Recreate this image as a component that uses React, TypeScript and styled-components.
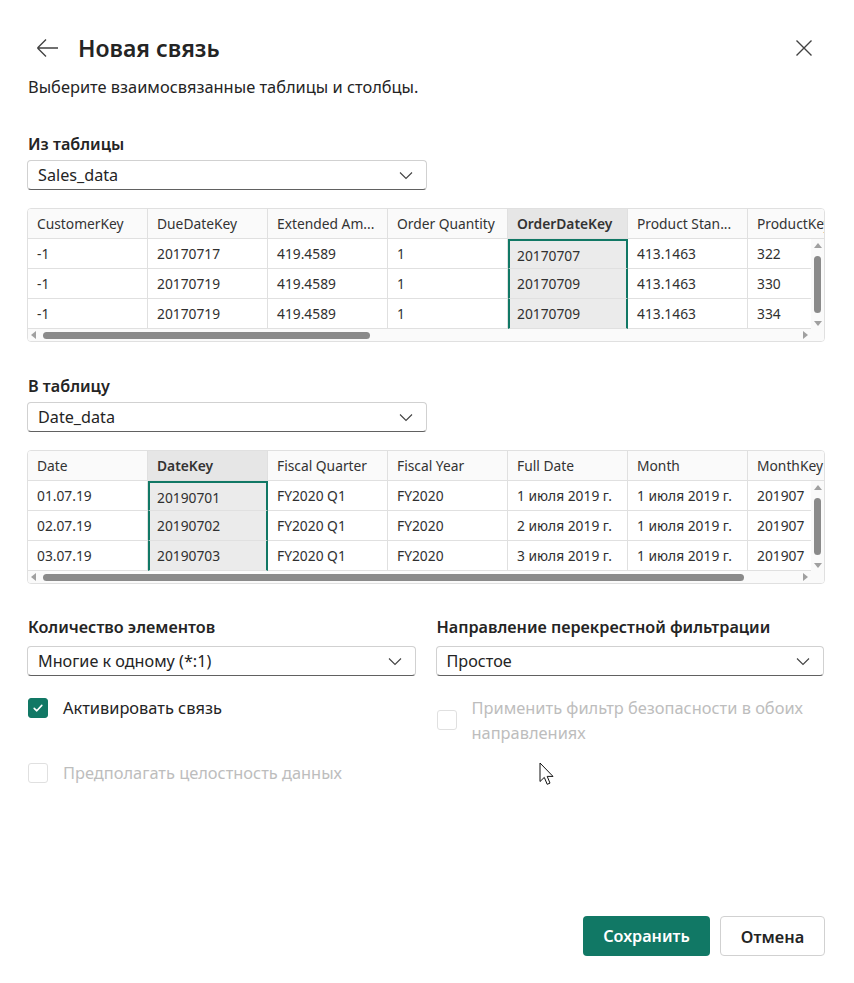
import React from 'react';
import styled, { createGlobalStyle } from 'styled-components';

const GREEN = '#117865';
const FONT = '"Noto Sans", "Open Sans", sans-serif';

interface GridProps {
  columns: string[],
  rows: string[][],
  selected: number,
  thumbLeft: number,
  thumbWidth: number,
}

const salesColumns = ['CustomerKey', 'DueDateKey', 'Extended Am...', 'Order Quantity', 'OrderDateKey', 'Product Stan...', 'ProductKey'];
const salesRows = [
  ['-1', '20170717', '419.4589', '1', '20170707', '413.1463', '322'],
  ['-1', '20170719', '419.4589', '1', '20170709', '413.1463', '330'],
  ['-1', '20170719', '419.4589', '1', '20170709', '413.1463', '334'],
];

const dateColumns = ['Date', 'DateKey', 'Fiscal Quarter', 'Fiscal Year', 'Full Date', 'Month', 'MonthKey'];
const dateRows = [
  ['01.07.19', '20190701', 'FY2020 Q1', 'FY2020', '1 июля 2019 г.', '1 июля 2019 г.', '201907'],
  ['02.07.19', '20190702', 'FY2020 Q1', 'FY2020', '2 июля 2019 г.', '1 июля 2019 г.', '201907'],
  ['03.07.19', '20190703', 'FY2020 Q1', 'FY2020', '3 июля 2019 г.', '1 июля 2019 г.', '201907'],
];

const Chevron = () => (
  <svg width="16" height="16" viewBox="0 0 16 16" fill="none">
    <path d="M2 5.5 8 11.5 14 5.5" stroke="#424242" strokeWidth="1.1" />
  </svg>
);

const DataGrid = (props: GridProps) => {
  const { columns, rows, selected, thumbLeft, thumbWidth } = props;
  return (
    <GridBox>
      <HeaderRow>
        {columns.map((c, i) => (
          <HeaderCell key={c} active={i === selected}>{c}</HeaderCell>
        ))}
      </HeaderRow>
      <BodyArea>
        <Rows>
          {rows.map((r, ri) => (
            <Row key={ri}>
              {r.map((v, ci) => (
                <Cell key={ci} active={ci === selected} first={ri === 0}>{v}</Cell>
              ))}
            </Row>
          ))}
        </Rows>
        <VScroll>
          <Arrow dir="up" />
          <VThumb />
          <Arrow dir="down" />
        </VScroll>
      </BodyArea>
      <HScroll>
        <Arrow dir="left" />
        <HTrack>
          <HThumb style={{ left: thumbLeft, width: thumbWidth }} />
        </HTrack>
        <Arrow dir="right" />
        <Corner />
      </HScroll>
    </GridBox>
  );
};

const Checkbox = ({ checked, disabled }: { checked?: boolean, disabled?: boolean }) => (
  <Box checked={!!checked} disabled={!!disabled}>
    {checked && (
      <svg width="12" height="12" viewBox="0 0 12 12" fill="none">
        <path d="M2.2 6.3 4.8 8.8 9.8 3.4" stroke="#fff" strokeWidth="1.6" strokeLinecap="round" strokeLinejoin="round" />
      </svg>
    )}
  </Box>
);

const App = () => (
  <Page>
    <GlobalStyle />
    <Header>
      <IconButton>
        <svg width="24" height="20" viewBox="0 0 24 20" fill="none">
          <path d="M1.5 10H22M1.5 10 10 1.5M1.5 10 10 18.5" stroke="#424242" strokeWidth="1.4" />
        </svg>
      </IconButton>
      <Title>Новая связь</Title>
      <CloseButton>
        <svg width="16" height="16" viewBox="0 0 16 16" fill="none">
          <path d="M0.5 0.5 15.5 15.5M15.5 0.5 0.5 15.5" stroke="#424242" strokeWidth="1.4" />
        </svg>
      </CloseButton>
    </Header>
    <Subtitle>Выберите взаимосвязанные таблицы и столбцы.</Subtitle>

    <Section>
      <FieldLabel>Из таблицы</FieldLabel>
      <Select wide>
        <span>Sales_data</span>
        <Chevron />
      </Select>
      <DataGrid columns={salesColumns} rows={salesRows} selected={4} thumbLeft={3} thumbWidth={327} />
    </Section>

    <Section>
      <FieldLabel>В таблицу</FieldLabel>
      <Select wide>
        <span>Date_data</span>
        <Chevron />
      </Select>
      <DataGrid columns={dateColumns} rows={dateRows} selected={1} thumbLeft={3} thumbWidth={701} />
    </Section>

    <Options>
      <OptionCol>
        <FieldLabel spaced>Количество элементов</FieldLabel>
        <Select>
          <span>Многие к одному (*:1)</span>
          <Chevron />
        </Select>
        <CheckList>
          <CheckRow>
            <Checkbox checked />
            <CheckText>Активировать связь</CheckText>
          </CheckRow>
          <CheckRow>
            <Checkbox disabled />
            <CheckText disabled>Предполагать целостность данных</CheckText>
          </CheckRow>
        </CheckList>
      </OptionCol>
      <OptionCol>
        <FieldLabel spaced>Направление перекрестной фильтрации</FieldLabel>
        <Select>
          <span>Простое</span>
          <Chevron />
        </Select>
        <CheckList>
          <CheckRow>
            <Checkbox disabled />
            <CheckText disabled>Применить фильтр безопасности в обоих направлениях</CheckText>
          </CheckRow>
        </CheckList>
      </OptionCol>
    </Options>

    <Footer>
      <PrimaryButton>Сохранить</PrimaryButton>
      <SecondaryButton>Отмена</SecondaryButton>
    </Footer>

    <Pointer width="17" height="25" viewBox="0 0 17 25">
      <path d="M1 1V19.5L5.3 15.4 8.2 22.3 11 21.1 8.2 14.4H14Z" fill="#fff" stroke="#111" strokeWidth="1" strokeLinejoin="round" />
    </Pointer>
  </Page>
);

export default App;

const GlobalStyle = createGlobalStyle`
  html, body {
    margin: 0;
    padding: 0;
    background: #fff;
  }
  * {
    box-sizing: border-box;
  }
`;

const Page = styled.div`
  position: relative;
  display: flex;
  flex-direction: column;
  width: 854px;
  min-height: 983px;
  padding: 28px 30px 27px 27px;
  font-family: ${FONT};
  color: #242424;
  background: #fff;
`;

const Header = styled.div`
  display: flex;
  align-items: center;
  height: 40px;
`;

const IconButton = styled.div`
  display: flex;
  align-items: center;
  width: 24px;
  margin-left: 9px;
  margin-right: 18px;
`;

const Title = styled.h1`
  flex: 1;
  margin: 0;
  font-size: 23px;
  font-weight: 600;
  line-height: 32px;
  color: #242424;
`;

const CloseButton = styled.div`
  display: flex;
  align-items: center;
  margin-right: 12px;
`;

const Subtitle = styled.p`
  margin: 8px 0 0 1px;
  font-size: 16.4px;
  line-height: 22px;
  color: #242424;
`;

const Section = styled.div`
  display: flex;
  flex-direction: column;
  margin-top: 35px;

  & + & {
    margin-top: 33px;
  }
`;

const FieldLabel = styled.div<{ spaced?: boolean }>`
  margin-left: 1px;
  font-size: 16.2px;
  font-weight: 600;
  line-height: 22px;
  white-space: nowrap;
  margin-bottom: ${({ spaced }) => (spaced ? '8px' : '5px')};
`;

const Select = styled.div<{ wide?: boolean }>`
  display: flex;
  align-items: center;
  justify-content: space-between;
  width: ${({ wide }) => (wide ? '400px' : '100%')};
  height: 30px;
  padding: 0 12px 0 10px;
  border: 1px solid #d1d1d1;
  border-bottom-color: #616161;
  border-radius: 4px;
  font-size: 16.2px;
  color: #242424;
  background: #fff;
`;

const GridBox = styled.div`
  display: flex;
  flex-direction: column;
  width: 798px;
  height: 134px;
  margin-top: 18px;
  border: 1px solid #e0e0e0;
  border-radius: 4px;
  overflow: hidden;
  font-size: 13.8px;
`;

const HeaderRow = styled.div`
  display: flex;
  height: 30px;
  flex: 0 0 auto;
  background: #fafafa;
  border-bottom: 1px solid #e0e0e0;
`;

const HeaderCell = styled.div<{ active: boolean }>`
  flex: 0 0 120px;
  display: flex;
  align-items: center;
  padding-left: 9px;
  border-right: 1px solid #e0e0e0;
  white-space: nowrap;
  overflow: hidden;
  color: #333;
  font-weight: ${({ active }) => (active ? 600 : 400)};
  background: ${({ active }) => (active ? '#e6e6e6' : 'transparent')};
`;

const BodyArea = styled.div`
  display: flex;
  height: 90px;
  flex: 0 0 auto;
`;

const Rows = styled.div`
  flex: 1;
  overflow: hidden;
`;

const Row = styled.div`
  display: flex;
  height: 30px;
`;

const Cell = styled.div<{ active: boolean, first: boolean }>`
  flex: 0 0 120px;
  display: flex;
  align-items: center;
  padding-left: ${({ active }) => (active ? '7px' : '9px')};
  padding-top: ${({ active, first }) => (active && first ? '2px' : '0')};
  white-space: nowrap;
  color: #303030;
  border-right: 1px solid #e0e0e0;
  border-bottom: 1px solid #e0e0e0;
  ${({ active, first }) => active && `
    background: #ebebeb;
    border-left: 2px solid ${GREEN};
    border-right: 2px solid ${GREEN};
    ${first ? `border-top: 2px solid ${GREEN};` : ''}
  `}
`;

const VScroll = styled.div`
  flex: 0 0 13px;
  display: flex;
  flex-direction: column;
  align-items: center;
  justify-content: space-between;
  padding: 4px 0 3px;
  background: #fafafa;
`;

const VThumb = styled.div`
  width: 7px;
  flex: 0 0 57px;
  border-radius: 4px;
  background: #8a8a8a;
`;

const HScroll = styled.div`
  display: flex;
  align-items: center;
  flex: 1;
  padding-left: 3px;
  background: #fafafa;
`;

const HTrack = styled.div`
  position: relative;
  flex: 1;
  height: 7px;
  margin: 0 4px;
`;

const HThumb = styled.div`
  position: absolute;
  top: 0;
  height: 7px;
  border-radius: 4px;
  background: #8a8a8a;
`;

const Corner = styled.div`
  width: 16px;
`;

const arrowShapes: Record<string, string> = {
  up: 'border-left: 4px solid transparent; border-right: 4px solid transparent; border-bottom: 5px solid #a0a0a0;',
  down: 'border-left: 4px solid transparent; border-right: 4px solid transparent; border-top: 5px solid #a0a0a0;',
  left: 'border-top: 4px solid transparent; border-bottom: 4px solid transparent; border-right: 5px solid #a0a0a0;',
  right: 'border-top: 4px solid transparent; border-bottom: 4px solid transparent; border-left: 5px solid #a0a0a0;',
};

const Arrow = styled.div<{ dir: 'up' | 'down' | 'left' | 'right' }>`
  width: 0;
  height: 0;
  flex: 0 0 auto;
  ${({ dir }) => arrowShapes[dir]}
`;

const Options = styled.div`
  display: grid;
  grid-template-columns: 1fr 1fr;
  column-gap: 20px;
  margin-top: 32px;
`;

const OptionCol = styled.div`
  display: flex;
  flex-direction: column;
`;

const CheckList = styled.div`
  display: flex;
  flex-direction: column;
  gap: 40px;
  margin-top: 19px;
`;

const CheckRow = styled.div`
  display: flex;
  align-items: center;
  gap: 15px;
  min-height: 24px;
  padding-left: 1px;
`;

const Box = styled.div<{ checked: boolean, disabled: boolean }>`
  flex: 0 0 20px;
  height: 20px;
  display: flex;
  align-items: center;
  justify-content: center;
  border-radius: 3px;
  border: 1px solid ${({ checked, disabled }) => (checked ? GREEN : disabled ? '#e0e0e0' : '#616161')};
  background: ${({ checked }) => (checked ? GREEN : '#fff')};
`;

const CheckText = styled.span<{ disabled?: boolean }>`
  font-size: 16.4px;
  line-height: 25px;
  color: ${({ disabled }) => (disabled ? '#bdbdbd' : '#242424')};
`;

const Footer = styled.div`
  display: flex;
  justify-content: flex-end;
  gap: 10px;
  margin-top: auto;
  margin-right: -1px;
`;

const PrimaryButton = styled.button`
  height: 40px;
  width: 127px;
  border: none;
  border-radius: 4px;
  background: ${GREEN};
  color: #fff;
  font-family: ${FONT};
  font-size: 16.2px;
  font-weight: 600;
`;

const SecondaryButton = styled.button`
  height: 40px;
  width: 105px;
  border: 1px solid #d1d1d1;
  border-radius: 4px;
  background: #fff;
  color: #242424;
  font-family: ${FONT};
  font-size: 16.4px;
  font-weight: 600;
`;

const Pointer = styled.svg`
  position: absolute;
  left: 539px;
  top: 762px;
`;
